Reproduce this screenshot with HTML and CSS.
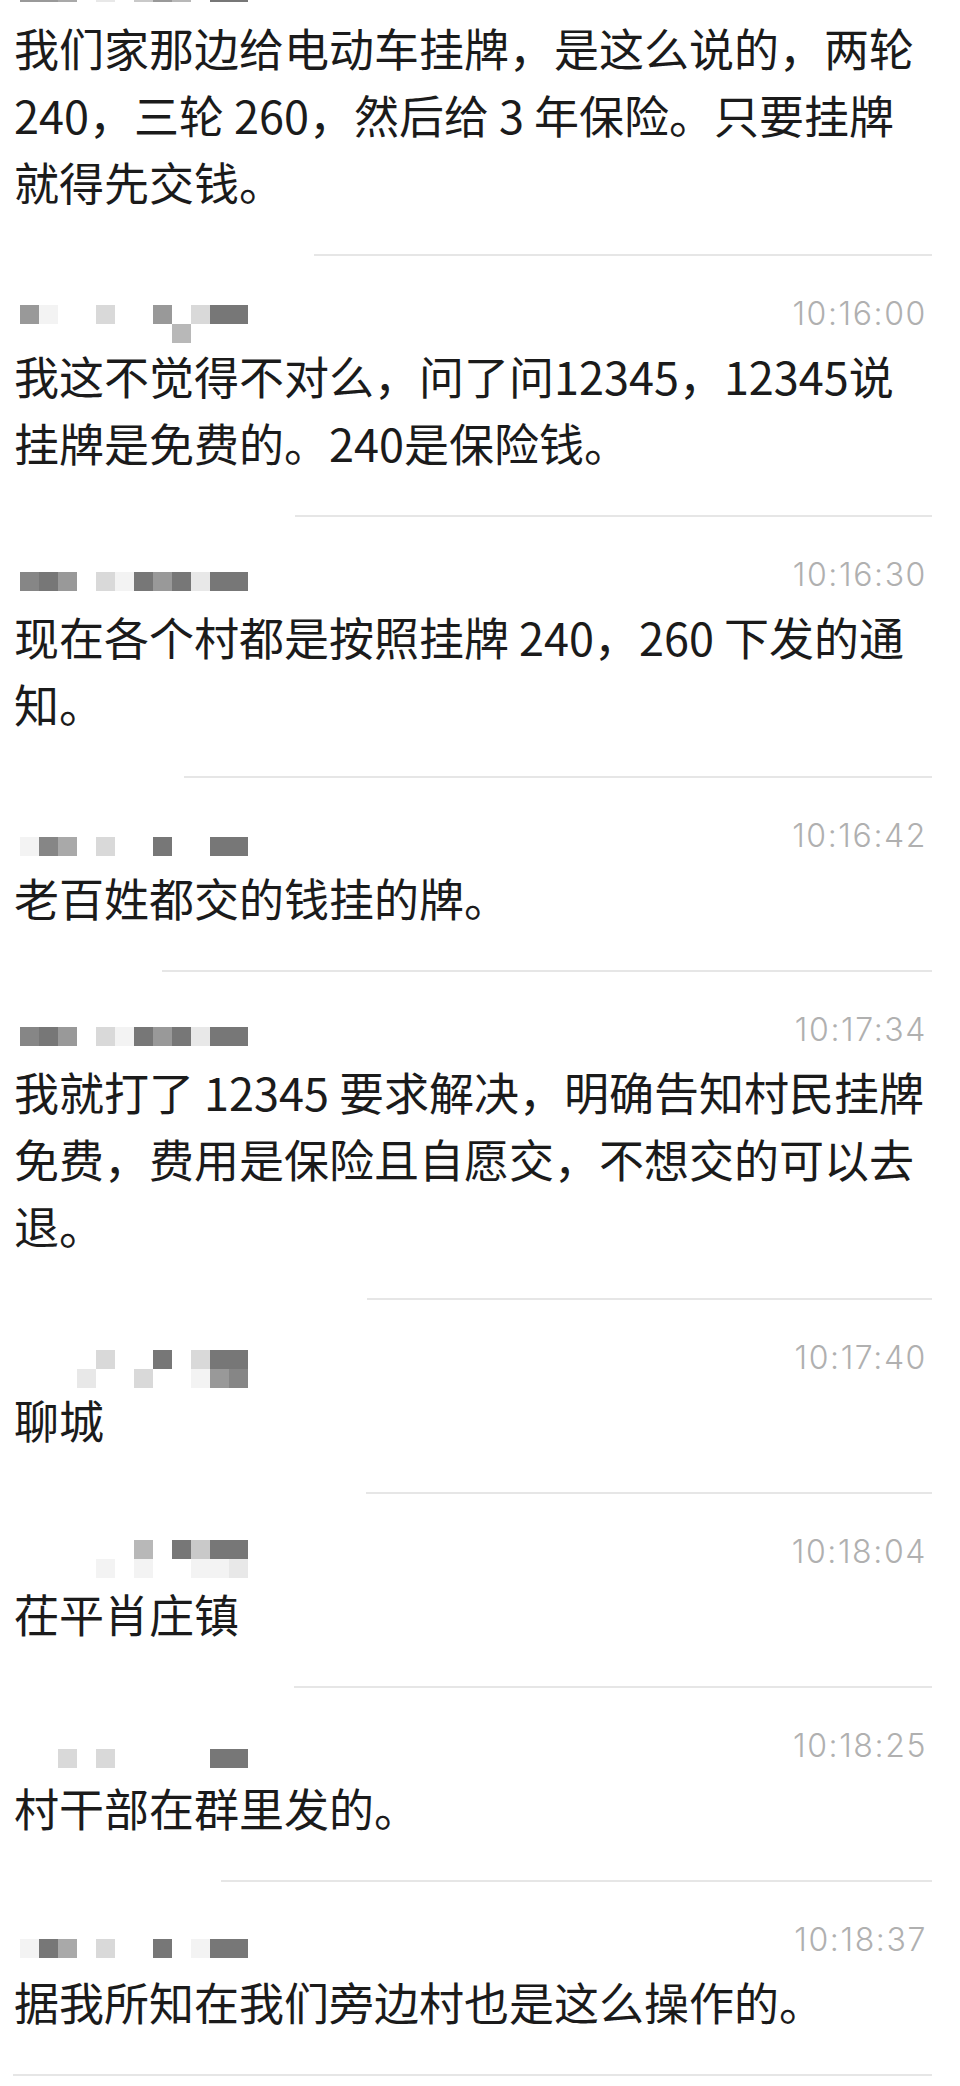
FILE: index.html
```html
<!DOCTYPE html>
<html lang="zh-CN">
<head>
<meta charset="utf-8">
<title>聊天记录</title>
<link rel="stylesheet" href="styles.css">
</head>
<body>
<main class="feed">

  <article class="msg">
    <header class="msg-head">
      <div class="mosaic o17">
        <i class="s9"></i><i class="s9"></i><i class="sa"></i><i></i><i class="se"></i><i></i><i class="sc"></i><i class="s9"></i><i class="sb"></i><i></i><i class="s7"></i><i class="s7"></i>
      </div>
    </header>
    <p class="msg-text">我们家那边给电动车挂牌，是这么说的，两轮<br>240，三轮 260，然后给 3 年保险。只要挂牌<br>就得先交钱。</p>
  </article>
  <div class="rule rule-314"></div>

  <article class="msg">
    <header class="msg-head">
      <div class="mosaic o11">
        <i class="s9"></i><i class="sf"></i><i></i><i></i><i class="sd"></i><i></i><i></i><i class="s9"></i><i></i><i class="sd"></i><i class="s7"></i><i class="s7"></i>
        <i></i><i></i><i></i><i></i><i></i><i></i><i></i><i></i><i class="sb"></i><i></i><i></i><i></i>
      </div>
      <time class="msg-time">10:16:00</time>
    </header>
    <p class="msg-text">我这不觉得不对么，问了问12345，12345说<br>挂牌是免费的。240是保险钱。</p>
  </article>
  <div class="rule rule-295"></div>

  <article class="msg">
    <header class="msg-head">
      <div class="mosaic o17">
        <i class="s8"></i><i class="s7"></i><i class="s9"></i><i></i><i class="sd"></i><i class="sf"></i><i class="s7"></i><i class="s9"></i><i class="s7"></i><i class="se"></i><i class="s7"></i><i class="s7"></i>
      </div>
      <time class="msg-time">10:16:30</time>
    </header>
    <p class="msg-text">现在各个村都是按照挂牌 240，260 下发的通<br>知。</p>
  </article>
  <div class="rule rule-184"></div>

  <article class="msg">
    <header class="msg-head">
      <div class="mosaic o21">
        <i class="sf"></i><i class="s8"></i><i class="sa"></i><i></i><i class="sd"></i><i></i><i></i><i class="s7"></i><i></i><i></i><i class="s7"></i><i class="s7"></i>
      </div>
      <time class="msg-time">10:16:42</time>
    </header>
    <p class="msg-text">老百姓都交的钱挂的牌。</p>
  </article>
  <div class="rule rule-162"></div>

  <article class="msg">
    <header class="msg-head">
      <div class="mosaic o17">
        <i class="s8"></i><i class="s7"></i><i class="s9"></i><i></i><i class="sd"></i><i class="sf"></i><i class="s7"></i><i class="s9"></i><i class="s7"></i><i class="se"></i><i class="s7"></i><i class="s7"></i>
      </div>
      <time class="msg-time">10:17:34</time>
    </header>
    <p class="msg-text">我就打了 12345 要求解决，明确告知村民挂牌<br>免费，费用是保险且自愿交，不想交的可以去<br>退。</p>
  </article>
  <div class="rule rule-367"></div>

  <article class="msg">
    <header class="msg-head">
      <div class="mosaic o12">
        <i></i><i></i><i></i><i></i><i class="sd"></i><i></i><i></i><i class="s7"></i><i></i><i class="sd"></i><i class="s7"></i><i class="s7"></i>
        <i></i><i></i><i></i><i class="se"></i><i></i><i></i><i class="sd"></i><i></i><i></i><i class="sf"></i><i class="s9"></i><i class="s8"></i>
      </div>
      <time class="msg-time">10:17:40</time>
    </header>
    <p class="msg-text">聊城</p>
  </article>
  <div class="rule rule-366"></div>

  <article class="msg">
    <header class="msg-head">
      <div class="mosaic o8">
        <i></i><i></i><i></i><i></i><i></i><i></i><i class="sb"></i><i></i><i class="s7"></i><i class="sc"></i><i class="s7"></i><i class="s7"></i>
        <i></i><i></i><i></i><i></i><i class="sf"></i><i></i><i class="sf"></i><i></i><i></i><i class="sf"></i><i class="sf"></i><i class="se"></i>
      </div>
      <time class="msg-time">10:18:04</time>
    </header>
    <p class="msg-text">茌平肖庄镇</p>
  </article>
  <div class="rule rule-294"></div>

  <article class="msg">
    <header class="msg-head">
      <div class="mosaic o23">
        <i></i><i></i><i class="sd"></i><i></i><i class="sd"></i><i></i><i></i><i></i><i></i><i></i><i class="s7"></i><i class="s7"></i>
      </div>
      <time class="msg-time">10:18:25</time>
    </header>
    <p class="msg-text">村干部在群里发的。</p>
  </article>
  <div class="rule rule-221"></div>

  <article class="msg">
    <header class="msg-head">
      <div class="mosaic o19">
        <i class="sf"></i><i class="s7"></i><i class="sa"></i><i></i><i class="sd"></i><i></i><i></i><i class="s7"></i><i></i><i class="sf"></i><i class="s7"></i><i class="s7"></i>
      </div>
      <time class="msg-time">10:18:37</time>
    </header>
    <p class="msg-text">据我所知在我们旁边村也是这么操作的。</p>
  </article>
  <div class="rule rule-13"></div>

</main>
</body>
</html>
```

FILE: styles.css
```css
* {
  box-sizing: border-box;
}

html,
body {
  margin: 0;
  padding: 0;
  background: #ffffff;
}

body {
  width: 960px;
  height: 2086px;
  overflow: hidden;
  font-family: "Noto Sans CJK SC", "Noto Sans", sans-serif;
  color: #1b1b1b;
}

.feed {
  margin-top: -72px;
}

.msg {
  padding: 38px 33px 39px 14px;
}

.msg-head {
  height: 40px;
  display: flex;
  justify-content: space-between;
  align-items: flex-start;
}

.mosaic {
  display: grid;
  grid-template-columns: repeat(12, 19px);
  grid-auto-rows: 19px;
  margin-left: 6px;
}

.mosaic i {
  display: block;
}

.o8 { margin-top: 8px; }
.o11 { margin-top: 11px; }
.o12 { margin-top: 12px; }
.o17 { margin-top: 17px; }
.o19 { margin-top: 19px; }
.o21 { margin-top: 21px; }
.o23 { margin-top: 23px; }

.s7 { background: #777777; }
.s8 { background: #868686; }
.s9 { background: #999999; }
.sa { background: #a9a9a9; }
.sb { background: #b8b8b8; }
.sc { background: #c9c9c9; }
.sd { background: #d9d9d9; }
.se { background: #e8e8e8; }
.sf { background: #f3f3f3; }

.msg-time {
  font-family: "Inter", "Liberation Sans", sans-serif;
  font-size: 32px;
  font-weight: 300;
  line-height: 40px;
  letter-spacing: 1.6px;
  color: #b0b0b0;
}

.msg-text {
  margin: 8px 0 0;
  font-size: 45px;
  line-height: 67px;
}

.rule {
  height: 2px;
  margin-right: 28px;
  background: #e6e6e6;
}

.rule-314 { margin-left: 314px; }
.rule-295 { margin-left: 295px; }
.rule-184 { margin-left: 184px; }
.rule-162 { margin-left: 162px; }
.rule-367 { margin-left: 367px; }
.rule-366 { margin-left: 366px; }
.rule-294 { margin-left: 294px; }
.rule-221 { margin-left: 221px; }
.rule-13 { margin-left: 13px; }
```
